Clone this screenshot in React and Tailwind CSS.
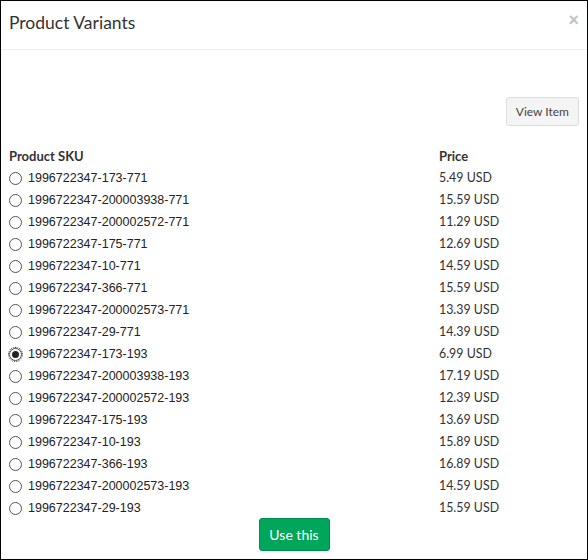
import React from "react";

const rows = [
  ["1996722347-173-771", "5.49 USD"],
  ["1996722347-200003938-771", "15.59 USD"],
  ["1996722347-200002572-771", "11.29 USD"],
  ["1996722347-175-771", "12.69 USD"],
  ["1996722347-10-771", "14.59 USD"],
  ["1996722347-366-771", "15.59 USD"],
  ["1996722347-200002573-771", "13.39 USD"],
  ["1996722347-29-771", "14.39 USD"],
  ["1996722347-173-193", "6.99 USD"],
  ["1996722347-200003938-193", "17.19 USD"],
  ["1996722347-200002572-193", "12.39 USD"],
  ["1996722347-175-193", "13.69 USD"],
  ["1996722347-10-193", "15.89 USD"],
  ["1996722347-366-193", "16.89 USD"],
  ["1996722347-200002573-193", "14.59 USD"],
  ["1996722347-29-193", "15.59 USD"],
];

function Radio({ checked }) {
  return (
    <span className="relative flex h-[13px] w-[13px] items-center justify-center rounded-full border border-[#555] bg-white">
      {checked && <span className="h-[7px] w-[7px] rounded-full bg-[#222]" />}
      {checked && (
        <span className="absolute -inset-[2px] rounded-full border border-dotted border-[#333]" />
      )}
    </span>
  );
}

export default function App() {
  const sans = { fontFamily: "Lato, 'Open Sans', sans-serif" };
  return (
    <div className="h-[560px] w-[588px] overflow-hidden border border-black bg-white text-[#333]" style={sans}>
      <div className="flex h-[49px] items-start justify-between border-b border-[#eeeeee] pl-[8px] pr-[8px] pt-[13px]">
        <h4 className="text-[17.5px] leading-none text-[#333]" style={{ fontFamily: "Lato, sans-serif" }}>Product Variants</h4>
        <span className="-mt-[3px] text-[18px] font-bold leading-none text-[#c4c4c4]" style={{ fontFamily: "'Liberation Sans', Arial, sans-serif" }}>×</span>
      </div>
      <div className="px-[8px]">
        <div className="mt-[47px] flex justify-end">
          <button className="h-[29px] rounded-[3px] border border-[#dddddd] bg-[#f4f4f4] px-[9px] text-[12px] text-[#444]">
            View Item
          </button>
        </div>
        <div className="mt-[21px] grid h-[20px] grid-cols-[430px_1fr] items-center text-[13px] font-bold text-[#333]">
          <span>Product SKU</span>
          <span>Price</span>
        </div>
        {rows.map(([sku, price], i) => (
          <div key={sku} className="grid h-[22px] grid-cols-[430px_1fr] items-center">
            <label className="flex items-center gap-[6px]">
              <Radio checked={i === 8} />
              <span className="text-[12.5px] text-[#222]" style={{ fontFamily: "'Liberation Sans', Arial, sans-serif" }}>{sku}</span>
            </label>
            <span className="text-[12.4px] text-[#333]">{price}</span>
          </div>
        ))}
        <div className="-mt-px flex justify-center">
          <button className="h-[33px] w-[71px] rounded-[3px] border border-[#008d4c] bg-[#00a65a] text-[14px] text-white">
            Use this
          </button>
        </div>
      </div>
    </div>
  );
}
